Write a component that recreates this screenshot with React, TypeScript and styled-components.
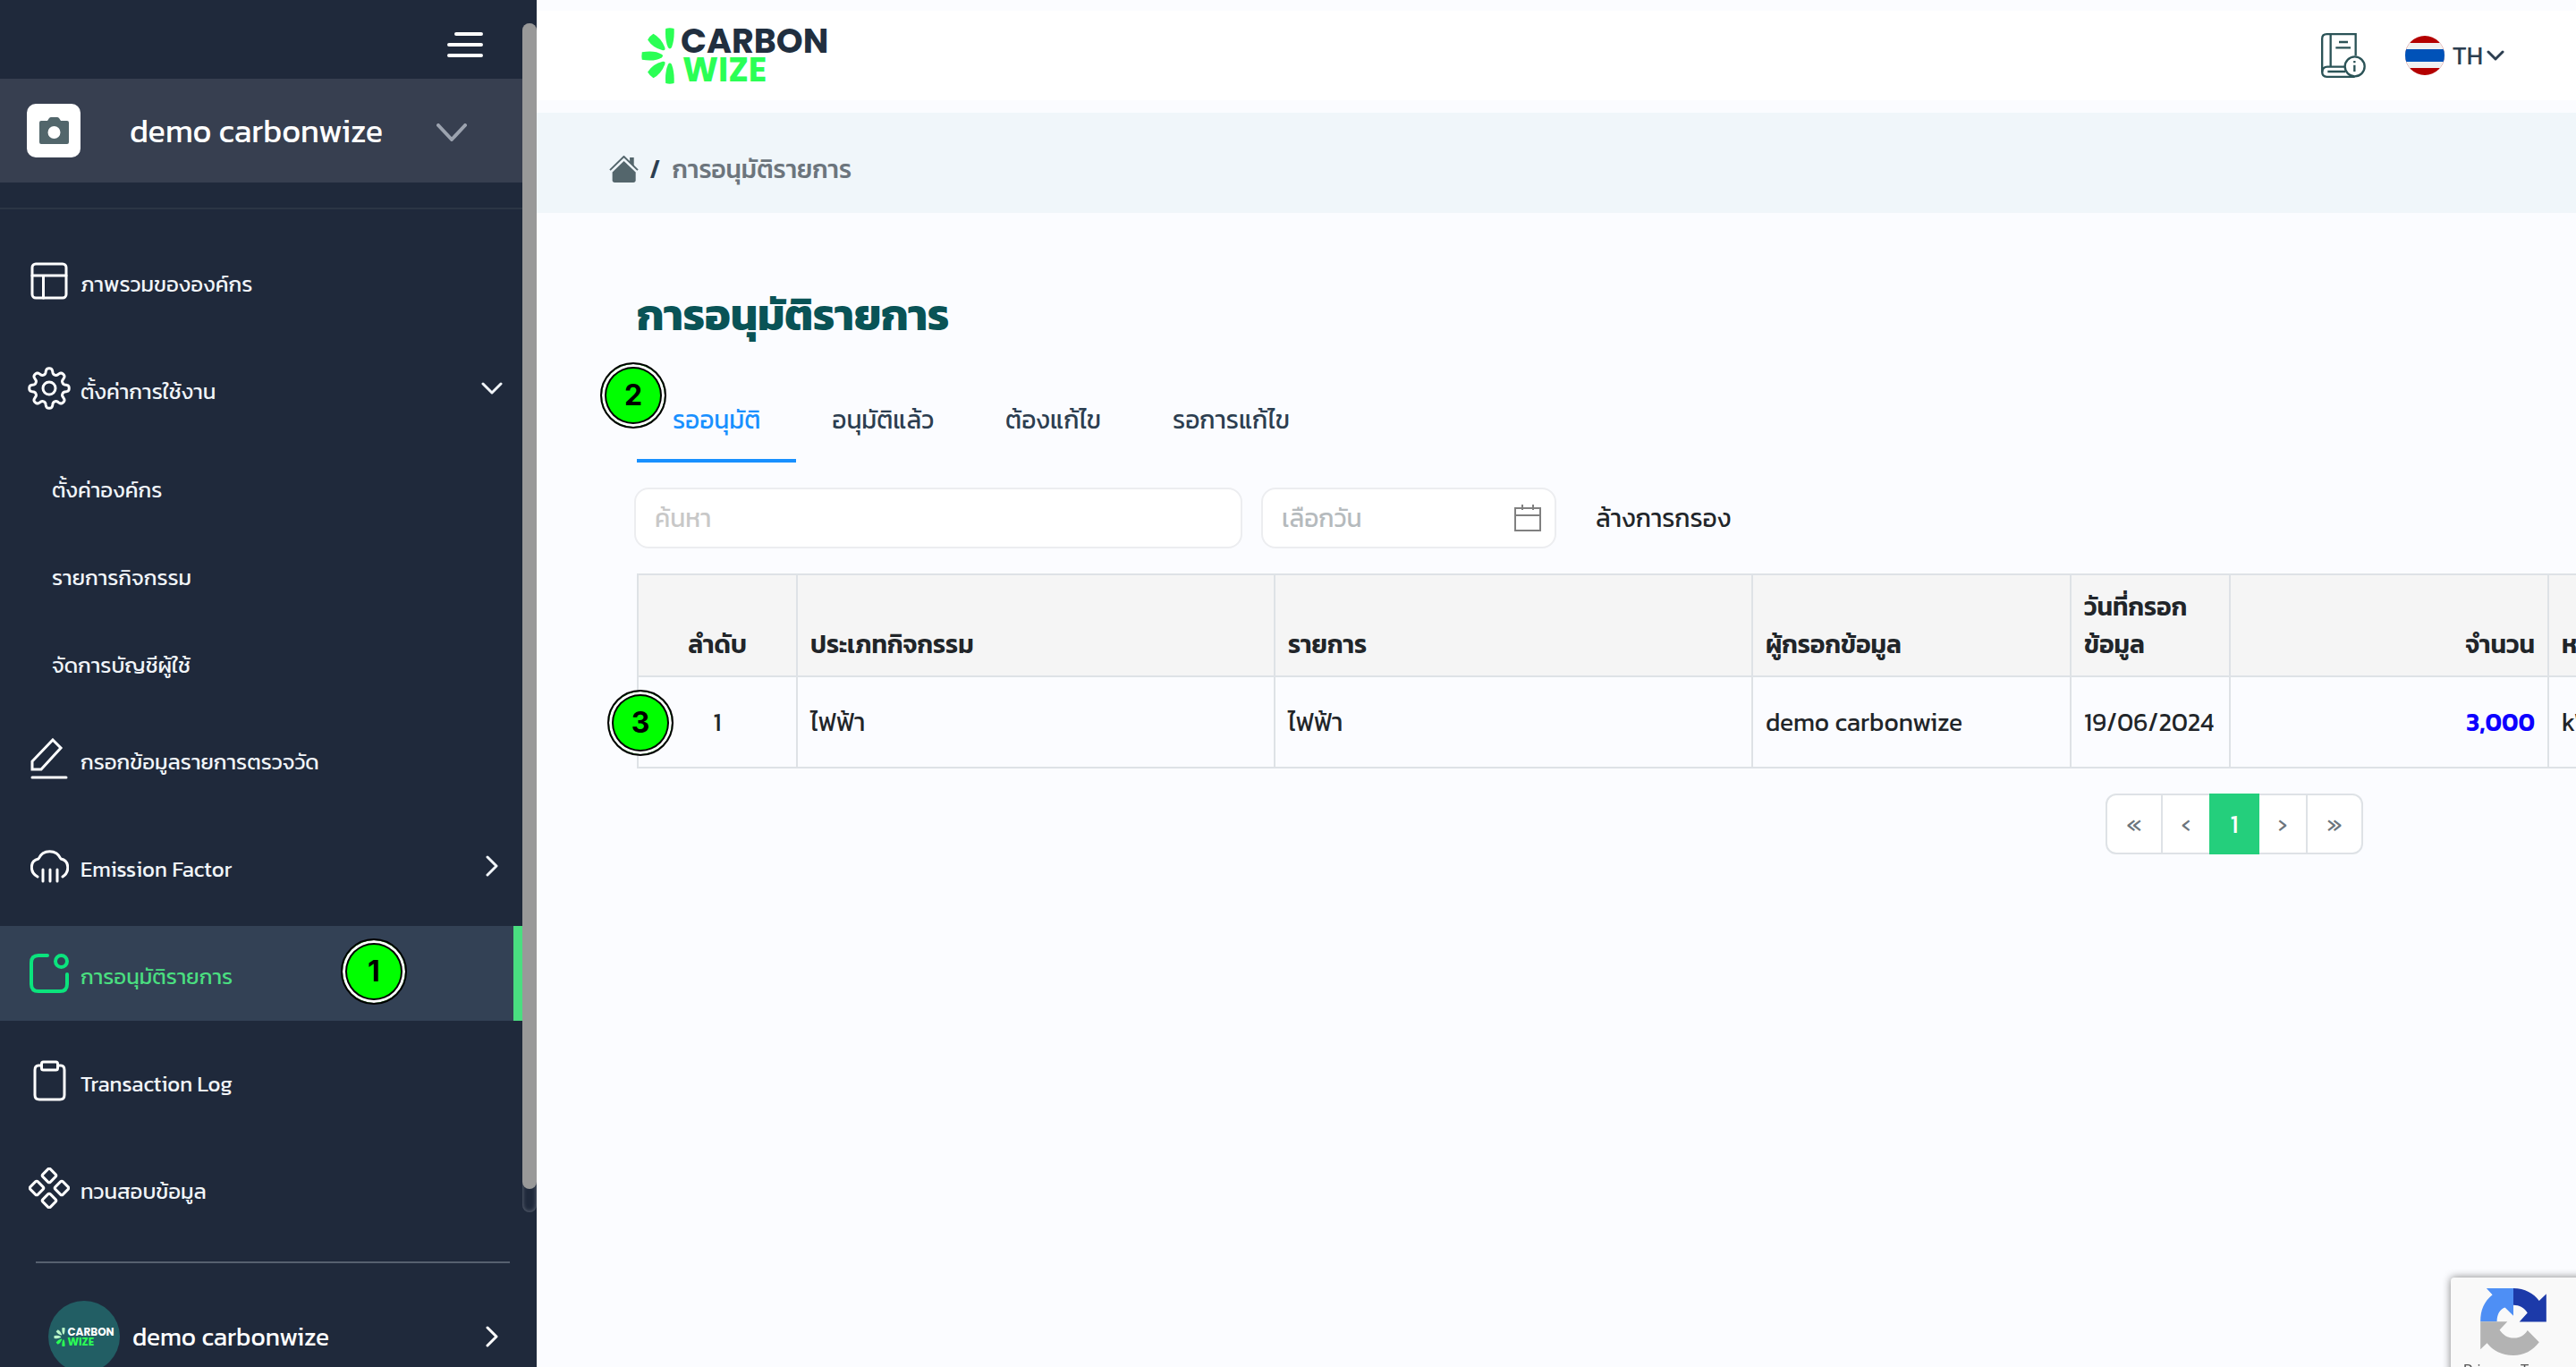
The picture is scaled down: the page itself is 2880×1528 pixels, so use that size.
import React from 'react';
import styled, { createGlobalStyle, css } from 'styled-components';

const color = {
  navy: '#1f293b',
  orgBar: '#373f50',
  active: '#334155',
  green: '#4ade80',
  slate: '#2c3e50',
  ink: '#212529',
  line: '#dee2e6',
  page: '#fbfcff',
  muted: '#6c757d',
  blue: '#1890ff',
};

const GlobalStyle = createGlobalStyle`
  *, *::before, *::after { box-sizing: border-box; }
  body {
    margin: 0;
    overflow: hidden;
    background: ${color.page};
    color: ${color.ink};
    font-family: Kanit, "Noto Sans Thai", "Noto Sans", sans-serif;
    font-size: 28px;
    line-height: 42px;
  }
  button, input { font: inherit; color: inherit; }
  button { border: 0; padding: 0; background: none; cursor: pointer; }
  a { color: inherit; text-decoration: none; }
  svg { display: block; flex: none; }
`;

/* ---------- shell ---------- */

const Shell = styled.div`
  display: flex;
  height: 100vh;
  overflow: hidden;
`;

const Sidebar = styled.aside`
  position: relative;
  flex: none;
  width: 600px;
  overflow: hidden;
  background: ${color.navy};
  color: #fff;
`;

const SidebarBody = styled.div`
  margin-right: 16px;
`;

const ScrollTrack = styled.div`
  position: absolute;
  top: 26px;
  right: 0;
  width: 16px;
  height: 87%;
  border-radius: 8px;
  box-shadow: inset 0 0 5px #6b7280;
`;

const ScrollThumb = styled.div`
  height: 98%;
  border-radius: 8px;
  background: #999;
`;

const Main = styled.main`
  flex: 1;
  min-width: 0;
  padding-top: 12px;
  overflow: hidden;
`;

/* ---------- sidebar ---------- */

const SidebarTop = styled.div`
  display: flex;
  justify-content: flex-end;
  align-items: center;
  height: 88px;
  padding: 12px 44px 0 0;
`;

const OrgSwitch = styled.button`
  display: flex;
  align-items: center;
  width: 100%;
  height: 116px;
  padding: 0 62px 0 30px;
  background: ${color.orgBar};
  font-size: 36px;
`;

const OrgPhoto = styled.span`
  display: grid;
  place-items: center;
  width: 60px;
  height: 60px;
  margin-right: 55px;
  border-radius: 10px;
  background: #fff;
`;

const OrgName = styled.span`
  flex: 1;
  text-align: left;
`;

const OrgArrow = styled.span`
  padding-top: 3px;
  color: #9ca3af;
`;

const Rule = styled.hr`
  height: 2px;
  margin: 28px 0 0;
  border: 0;
  background: #2b3545;
`;

const Menu = styled.nav`
  display: flex;
  flex-direction: column;
  gap: 14px;
  padding-top: 27px;
  color: #f1f5f9;
  font-size: 24px;
`;

const MenuItem = styled.a<{ $active?: boolean }>`
  position: relative;
  display: flex;
  align-items: center;
  height: 106px;
  padding: 0 22px 0 30px;
  ${(p) =>
    p.$active &&
    css`
      background: ${color.active};
      border-right: 10px solid ${color.green};
      color: ${color.green};
    `}
`;

const MenuIcon = styled.span`
  display: grid;
  place-items: center;
  width: 50px;
  margin-right: 10px;
  color: #fff;
`;

const MenuLabel = styled.span`
  flex: 1;
  padding-top: 7px;
`;

const SubMenu = styled.div`
  display: flex;
  flex-direction: column;
  margin-bottom: -14px;
`;

const SubItem = styled.a`
  display: flex;
  align-items: center;
  height: 98px;
  padding: 0 0 5px 58px;
`;

const Account = styled.button`
  display: flex;
  align-items: center;
  width: 530px;
  margin: 29px 0 0 40px;
  padding: 42px 8px 0 14px;
  border-top: 2px solid #56606f;
`;

const Avatar = styled.span`
  display: grid;
  place-items: center;
  width: 80px;
  height: 80px;
  margin-right: 14px;
  border-radius: 50%;
  background: #225e64;
`;

const AccountName = styled.span`
  flex: 1;
  text-align: left;
`;

/* ---------- logo ---------- */

const LogoRow = styled.span<{ $small?: boolean }>`
  display: flex;
  align-items: center;
  gap: ${(p) => (p.$small ? 2 : 7)}px;
  font-family: Poppins, Inter, sans-serif;
  font-weight: 700;
  font-size: ${(p) => (p.$small ? 12 : 38)}px;
  line-height: ${(p) => (p.$small ? 11 : 32)}px;
`;

const LogoWords = styled.span<{ $light?: boolean }>`
  display: flex;
  flex-direction: column;
  align-items: flex-start;
  color: ${(p) => (p.$light ? '#fff' : '#212f3f')};
`;

const LogoAccent = styled.span<{ $small?: boolean }>`
  padding-left: ${(p) => (p.$small ? 0 : 2)}px;
  color: #2bff55;
`;

/* ---------- header ---------- */

const Header = styled.header`
  display: flex;
  align-items: center;
  height: 100px;
  margin-bottom: 14px;
  padding: 0 80px 0 117px;
  background: #fff;
`;

const HelpLink = styled.a`
  margin: 0 44px 0 auto;
`;

const LanguageButton = styled.button`
  display: flex;
  align-items: center;
  color: ${color.slate};
`;

const LanguageCode = styled.span`
  margin: 0 4px 0 9px;
`;

const Breadcrumb = styled.nav`
  display: flex;
  align-items: center;
  height: 112px;
  padding: 14px 0 0 81px;
  background: #f0f6fa;
  color: ${color.slate};
  font-weight: 500;
`;

const Slash = styled.span`
  margin: 0 13px 0 12px;
`;

const Current = styled.span`
  color: ${color.muted};
`;

/* ---------- content ---------- */

const Content = styled.section`
  padding: 78px 0 0 112px;
`;

const Title = styled.h1`
  margin: 0;
  color: #095356;
  font-size: 48px;
  line-height: 72px;
  font-weight: 700;
`;

const Tabs = styled.div`
  position: relative;
  display: flex;
  margin-top: 36px;
`;

const Tab = styled.button<{ $active?: boolean }>`
  height: 93px;
  padding: 0 40px;
  border-bottom: 4px solid ${(p) => (p.$active ? color.blue : 'transparent')};
  color: ${(p) => (p.$active ? color.blue : color.slate)};
`;

const Filters = styled.form`
  display: flex;
  align-items: center;
  gap: 21px;
  margin: 28px 0 28px -3px;
`;

const Field = styled.label<{ $wide?: boolean }>`
  display: flex;
  align-items: center;
  width: ${(p) => (p.$wide ? 680 : 330)}px;
  height: 68px;
  padding: 0 15px 0 21px;
  border: 2px solid #ecedf0;
  border-radius: 16px;
  background: #fff;
`;

const FieldInput = styled.input<{ $tone: string }>`
  flex: 1;
  min-width: 0;
  padding: 0;
  border: 0;
  outline: 0;
  background: none;
  &::placeholder {
    color: ${(p) => p.$tone};
    opacity: 1;
  }
`;

const ClearButton = styled.button`
  margin-left: 23px;
`;

const Sheet = styled.div`
  position: relative;
  width: 3572px;
`;

const Table = styled.table`
  width: 100%;
  table-layout: fixed;
  border-collapse: collapse;
`;

const Col = styled.col<{ $units?: number }>`
  width: ${(p) => (p.$units ? `${p.$units * 178}px` : 'auto')};
`;

type Align = 'left' | 'center' | 'right';

const HeadCell = styled.th<{ $align?: Align }>`
  padding: 14px;
  border: 2px solid ${color.line};
  background: #f5f5f5;
  text-align: ${(p) => p.$align ?? 'left'};
  vertical-align: bottom;
  font-weight: 600;
`;

const Cell = styled.td<{ $align?: Align }>`
  height: 102px;
  padding: 0 14px;
  border: 2px solid ${color.line};
  text-align: ${(p) => p.$align ?? 'left'};
`;

const Amount = styled.a`
  color: #0d00ff;
  font-weight: 600;
`;

const Pager = styled.nav`
  display: flex;
  justify-content: center;
  margin-top: 28px;
`;

const PageButton = styled.button<{ $current?: boolean }>`
  width: 56px;
  height: 68px;
  border: 2px solid ${(p) => (p.$current ? '#24cf7c' : color.line)};
  background: ${(p) => (p.$current ? '#24cf7c' : '#fff')};
  color: ${(p) => (p.$current ? '#fff' : color.muted)};
  z-index: ${(p) => (p.$current ? 1 : 0)};
  & + & { margin-left: -2px; }
  &:first-child { width: 64px; border-radius: 12px 0 0 12px; }
  &:last-child { width: 64px; border-radius: 0 12px 12px 0; }
`;

/* ---------- overlays ---------- */

const StepBadge = styled.span<{ $left: number; $top: number }>`
  position: absolute;
  left: ${(p) => p.$left}px;
  top: ${(p) => p.$top}px;
  display: grid;
  place-items: center;
  width: 74px;
  height: 74px;
  border: 2px solid #000;
  border-radius: 50%;
  background: #0f0;
  box-shadow: inset 0 0 0 3px #fff, inset 0 0 0 5px #000;
  color: #000;
  font-family: Inter, sans-serif;
  font-size: 32px;
  font-weight: 700;
`;

const Captcha = styled.aside`
  position: fixed;
  right: -372px;
  bottom: -20px;
  width: 512px;
  height: 120px;
  padding: 12px 0 0 14px;
  border-radius: 4px;
  background: #f9f9f9;
  box-shadow: 0 0 10px gray;
  color: #555;
  font-family: Roboto, sans-serif;
  font-size: 16px;
  line-height: 20px;
`;

const CaptchaMark = styled.span`
  display: block;
  margin: 0 0 7px 19px;
`;

/* ---------- drawings ---------- */

const Stroke = ({ w, h, sw = 3, children }: { w: number; h: number; sw?: number; children: React.ReactNode }) => (
  <svg
    width={w}
    height={h}
    viewBox={`0 0 ${w} ${h}`}
    fill="none"
    stroke="currentColor"
    strokeWidth={sw}
    strokeLinecap="round"
    strokeLinejoin="round"
    aria-hidden="true"
  >
    {children}
  </svg>
);

const BurgerIcon = () => (
  <Stroke w={40} h={28} sw={4}>
    <path d="M10 2H38M2 14H38M2 26H38" />
  </Stroke>
);

const ChevronDown = ({ w = 22, h = 14, sw = 3 }: { w?: number; h?: number; sw?: number }) => (
  <Stroke w={w} h={h} sw={sw}>
    <path d={`M2 2L${w / 2} ${h - 2}L${w - 2} 2`} />
  </Stroke>
);

const ChevronRight = () => (
  <Stroke w={24} h={24}>
    <path d="M7 2L17 12L7 22" />
  </Stroke>
);

const CameraIcon = () => (
  <svg width="33" height="31" viewBox="0 0 33 31" fill="#52666b" aria-hidden="true">
    <path
      fillRule="evenodd"
      d="M9 4L11 1Q12 0 13 0H20Q21 0 22 1L24 4H31Q33 4 33 6V28Q33 30 31 30H2Q0 30 0 28V6Q0 4 2 4ZM16.500 10A7 7 0 1 0 16.500 24A7 7 0 1 0 16.500 10Z"
    />
  </svg>
);

const LayoutIcon = () => (
  <Stroke w={42} h={42}>
    <rect x="2" y="2" width="38" height="38" rx="4" />
    <path d="M2 15H40M14.500 15V40" />
  </Stroke>
);

/* Eight rounded teeth: the radius swells and dips smoothly around the hub. */
const gearOutline = Array.from({ length: 192 }, (_, i) => {
  const angle = (i / 192) * Math.PI * 2;
  const radius = 19.2 + 3.2 * Math.tanh(1.8 * Math.cos(8 * angle));
  return `${(25 + radius * Math.sin(angle)).toFixed(2)},${(25 - radius * Math.cos(angle)).toFixed(2)}`;
}).join(' ');

const GearIcon = () => (
  <Stroke w={50} h={50}>
    <polygon points={gearOutline} />
    <circle cx="25" cy="25" r="7" />
  </Stroke>
);

const PencilIcon = () => (
  <Stroke w={42} h={47}>
    <path d="M25 2L34 11L12 35H2V26Z" strokeLinejoin="miter" />
    <path d="M2 44H40" />
  </Stroke>
);

const CloudIcon = () => (
  <Stroke w={43} h={37}>
    <path d="M8 30C-1 25-1 12 9 10C14-1 29-1 34 10C44 12 44 25 36 30" />
    <path d="M14 22V35M22 22V35M30 22V35" />
  </Stroke>
);

const ApproveIcon = () => (
  <svg width="44" height="44" viewBox="0 0 44 44" fill="none" stroke="#0be37d" strokeWidth="4" strokeLinecap="round" aria-hidden="true">
    <path d="M20 2H10Q2 2 2 10V34Q2 42 10 42H34Q42 42 42 34V23" />
    <circle cx="35.500" cy="8.500" r="6.500" />
  </svg>
);

const ClipboardIcon = () => (
  <Stroke w={37} h={46}>
    <path d="M9 6H6Q2 6 2 11V39Q2 44 7 44H30Q35 44 35 39V11Q35 6 31 6H28" />
    <rect x="9.500" y="2" width="18" height="9" rx="2" />
  </Stroke>
);

const DiamondsIcon = () => (
  <Stroke w={46} h={46}>
    {[[23, 9], [23, 37], [9, 23], [37, 23]].map(([x, y]) => (
      <rect key={`${x}-${y}`} x={x - 6} y={y - 6} width="12" height="12" rx="2" transform={`rotate(45 ${x} ${y})`} />
    ))}
  </Stroke>
);

const HomeIcon = () => (
  <svg width="33" height="30" viewBox="34 455 98 91" fill="#54666c" aria-hidden="true">
    <path d="M103 461H117V492L103 478Z" />
    <path d="M83 473L123 511V538Q123 546 115 546H52Q44 546 44 538V511Z" />
    <path d="M36 504L83 458L130 504" fill="none" stroke="#54666c" strokeWidth="6" />
  </svg>
);

const BookIcon = () => (
  <svg width="50" height="50" viewBox="45 39 150 150" fill="none" stroke="#2b5357" strokeWidth="7" aria-hidden="true">
    <path d="M161 115V42.500H64Q48.500 42.500 48.500 58V169Q48.500 185.500 64 185.500H158" />
    <path d="M77 42V150M48.500 170Q50 152 66 152H124M67 168H126M105 69H135M94 88H144" />
    <circle cx="158" cy="151" r="33" fill="#fff" />
    <path d="M157 132V139M157 146V168" />
  </svg>
);

const FlagIcon = () => (
  <svg width="44" height="44" viewBox="0 0 44 44" aria-hidden="true">
    <clipPath id="flag-round">
      <circle cx="22" cy="22" r="22" />
    </clipPath>
    <g clipPath="url(#flag-round)">
      <rect width="44" height="44" fill="#b40000" />
      <rect y="8" width="44" height="28" fill="#f1f1f1" />
      <rect y="15" width="44" height="14" fill="#0052b8" />
    </g>
  </svg>
);

const CalendarIcon = () => (
  <svg width="30" height="30" viewBox="0 0 30 30" fill="none" stroke="#808080" strokeWidth="2" aria-hidden="true">
    <path d="M1 4H29V29H1ZM1 12H29M9 0V6M21 0V6" />
  </svg>
);

const Rays = ({ w, h, tint }: { w: number; h: number; tint: string }) => (
  <svg width={w} height={h} viewBox="142 32 110 188" aria-hidden="true">
    <g fill={tint}>
      <path d="M223 35Q237 31 251 35Q253 72 243 98Q237 106 231 98Q220 72 223 35Z" />
      <path d="M163 72Q170 59 182 52Q208 66 220 97Q224 109 213 107Q180 99 163 72Z" />
      <path d="M144 113Q188 106 210 121Q217 126 210 131Q188 146 144 139Q142 126 144 113Z" />
    </g>
    <g fill="#2bff55">
      <path d="M163 180Q170 193 182 200Q208 186 220 155Q224 143 213 145Q180 153 163 180Z" />
      <path d="M223 217Q237 221 251 217Q253 180 243 154Q237 146 231 154Q220 180 223 217Z" />
    </g>
  </svg>
);

const CaptchaIcon = () => (
  <svg width="74" height="75" viewBox="0 0 220 224" aria-hidden="true">
    <path fill="#4e8ff5" d="M20 0H110V92L82 64C66 68 55 87 55 111H0C0 73 12 45 40 22Z" />
    <path fill="#1c3aa9" d="M110 0C148 0 178 17 196 42L220 19V112H130L157 82C147 65 130 56 110 56Z" />
    <path fill="#b3b3b3" d="M0 111H90L64 139C75 156 90 166 112 166C133 166 148 156 157 140L196 180C175 208 145 224 110 224C70 224 42 208 22 183L0 204Z" />
  </svg>
);

const Logo = ({ small }: { small?: boolean }) => (
  <LogoRow $small={small}>
    <Rays w={small ? 13 : 37} h={small ? 21 : 63} tint={small ? '#b9f5c8' : '#2bff55'} />
    <LogoWords $light={small}>
      CARBON
      <LogoAccent $small={small}>WIZE</LogoAccent>
    </LogoWords>
  </LogoRow>
);

/* ---------- page ---------- */

const subItems = ['ตั้งค่าองค์กร', 'รายการกิจกรรม', 'จัดการบัญชีผู้ใช้'];
const tabs = ['รออนุมัติ', 'อนุมัติแล้ว', 'ต้องแก้ไข', 'รอการแก้ไข'];

export default function App() {
  return (
    <Shell>
      <GlobalStyle />
      <Sidebar>
        <SidebarBody>
          <SidebarTop>
            <button type="button" aria-label="เมนู">
              <BurgerIcon />
            </button>
          </SidebarTop>
          <OrgSwitch type="button">
            <OrgPhoto>
              <CameraIcon />
            </OrgPhoto>
            <OrgName>demo carbonwize</OrgName>
            <OrgArrow>
              <ChevronDown w={34} h={20} sw={4} />
            </OrgArrow>
          </OrgSwitch>
          <Rule />
          <Menu>
            <MenuItem href="#overview">
              <MenuIcon><LayoutIcon /></MenuIcon>
              <MenuLabel>ภาพรวมขององค์กร</MenuLabel>
            </MenuItem>
            <MenuItem href="#settings">
              <MenuIcon><GearIcon /></MenuIcon>
              <MenuLabel>ตั้งค่าการใช้งาน</MenuLabel>
              <ChevronDown w={24} />
            </MenuItem>
            <SubMenu>
              {subItems.map((label) => (
                <SubItem key={label} href="#settings">{label}</SubItem>
              ))}
            </SubMenu>
            <MenuItem href="#entry">
              <MenuIcon><PencilIcon /></MenuIcon>
              <MenuLabel>กรอกข้อมูลรายการตรวจวัด</MenuLabel>
            </MenuItem>
            <MenuItem href="#emission">
              <MenuIcon><CloudIcon /></MenuIcon>
              <MenuLabel>Emission Factor</MenuLabel>
              <ChevronRight />
            </MenuItem>
            <MenuItem href="#approve" $active aria-current="page">
              <MenuIcon><ApproveIcon /></MenuIcon>
              <MenuLabel>การอนุมัติรายการ</MenuLabel>
              <StepBadge $left={381} $top={14}>1</StepBadge>
            </MenuItem>
            <MenuItem href="#log">
              <MenuIcon><ClipboardIcon /></MenuIcon>
              <MenuLabel>Transaction Log</MenuLabel>
            </MenuItem>
            <MenuItem href="#verify">
              <MenuIcon><DiamondsIcon /></MenuIcon>
              <MenuLabel>ทวนสอบข้อมูล</MenuLabel>
            </MenuItem>
          </Menu>
          <Account type="button">
            <Avatar>
              <Logo small />
            </Avatar>
            <AccountName>demo carbonwize</AccountName>
            <ChevronRight />
          </Account>
        </SidebarBody>
        <ScrollTrack>
          <ScrollThumb />
        </ScrollTrack>
      </Sidebar>

      <Main>
        <Header>
          <Logo />
          <HelpLink href="#help" aria-label="คู่มือ">
            <BookIcon />
          </HelpLink>
          <LanguageButton type="button">
            <FlagIcon />
            <LanguageCode>TH</LanguageCode>
            <ChevronDown w={20} h={12} />
          </LanguageButton>
        </Header>

        <Breadcrumb>
          <a href="#home" aria-label="หน้าหลัก">
            <HomeIcon />
          </a>
          <Slash>/</Slash>
          <Current>การอนุมัติรายการ</Current>
        </Breadcrumb>

        <Content>
          <Title>การอนุมัติรายการ</Title>

          <Tabs>
            {tabs.map((label, i) => (
              <Tab key={label} type="button" $active={i === 0}>{label}</Tab>
            ))}
            <StepBadge $left={-41} $top={-19}>2</StepBadge>
          </Tabs>

          <Filters>
            <Field $wide>
              <FieldInput aria-label="ค้นหา" placeholder="ค้นหา" $tone="#c8c8c8" />
            </Field>
            <Field>
              <FieldInput aria-label="เลือกวัน" placeholder="เลือกวัน" $tone="#b5babd" />
              <CalendarIcon />
            </Field>
            <ClearButton type="reset">ล้างการกรอง</ClearButton>
          </Filters>

          <Sheet>
            <Table>
              <colgroup>
                <Col $units={1} />
                <Col $units={3} />
                <Col $units={3} />
                <Col $units={2} />
                <Col $units={1} />
                <Col $units={2} />
                <Col />
              </colgroup>
              <thead>
                <tr>
                  <HeadCell $align="center">ลำดับ</HeadCell>
                  <HeadCell>ประเภทกิจกรรม</HeadCell>
                  <HeadCell>รายการ</HeadCell>
                  <HeadCell>ผู้กรอกข้อมูล</HeadCell>
                  <HeadCell>วันที่กรอก<br />ข้อมูล</HeadCell>
                  <HeadCell $align="right">จำนวน</HeadCell>
                  <HeadCell>หน่วย</HeadCell>
                </tr>
              </thead>
              <tbody>
                <tr>
                  <Cell $align="center">1</Cell>
                  <Cell>ไฟฟ้า</Cell>
                  <Cell>ไฟฟ้า</Cell>
                  <Cell>demo carbonwize</Cell>
                  <Cell>19/06/2024</Cell>
                  <Cell $align="right"><Amount href="#detail">3,000</Amount></Cell>
                  <Cell>kWh</Cell>
                </tr>
              </tbody>
            </Table>
            <StepBadge $left={-33} $top={130}>3</StepBadge>
            <Pager aria-label="หน้า">
              <PageButton type="button">«</PageButton>
              <PageButton type="button">‹</PageButton>
              <PageButton type="button" $current>1</PageButton>
              <PageButton type="button">›</PageButton>
              <PageButton type="button">»</PageButton>
            </Pager>
          </Sheet>
        </Content>
      </Main>

      <Captcha>
        <CaptchaMark>
          <CaptchaIcon />
        </CaptchaMark>
        Privacy - Terms
      </Captcha>
    </Shell>
  );
}
